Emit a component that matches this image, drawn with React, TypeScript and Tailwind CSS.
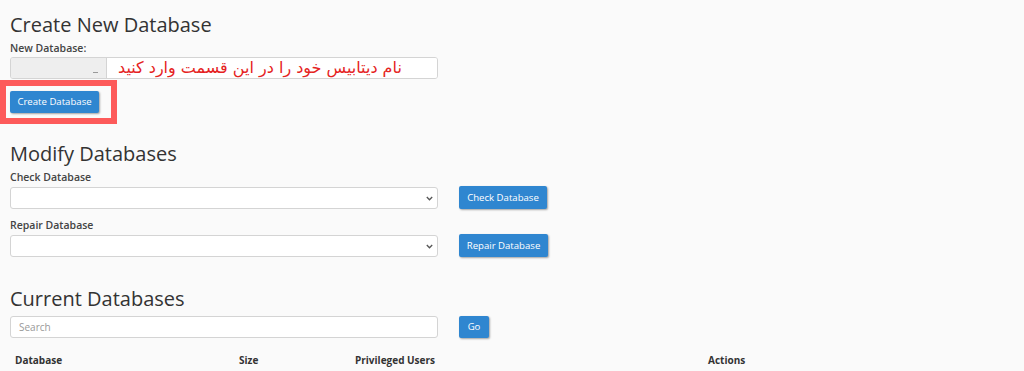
const font = { fontFamily: '"Open Sans", sans-serif' };

function Btn({ label, className = '' }: { label: string; className?: string }) {
  return (
    <button
      className={`shrink-0 rounded-[2px] bg-[#2f86d0] text-white text-[9.6px] leading-none whitespace-nowrap shadow-[1px_1px_2px_rgba(0,0,0,0.35)] ${className}`}
    >
      {label}
    </button>
  );
}

function Select() {
  return (
    <div className="relative w-[428px] h-[22px] bg-white border border-[#d4d4d4] rounded-[3px]">
      <svg
        className="absolute right-[4px] top-[8px]"
        width="7"
        height="5"
        viewBox="0 0 7 5"
        fill="none"
        stroke="#555"
        strokeWidth="1.3"
      >
        <path d="M0.8 1 L3.5 3.8 L6.2 1" />
      </svg>
    </div>
  );
}

function Label({ text, className = '' }: { text: string; className?: string }) {
  return <p className={`text-[10.5px] leading-[14px] font-semibold text-[#444] ${className}`}>{text}</p>;
}

export default function App() {
  return (
    <div className="w-[1024px] h-[371px] overflow-hidden bg-[#fafafa] text-[#333]" style={font}>
      <div className="pl-[10px] pt-[11px]">
        <h2 className="text-[20px] leading-[27px] text-[#333]">Create New Database</h2>
        <Label text="New Database:" className="mt-[3px]" />
        <div className="mt-[2px] flex w-[428px] h-[22px] border border-[#d4d4d4] rounded-[3px] overflow-hidden">
          <div className="w-[96px] bg-[#eeeeee] border-r border-[#d4d4d4] flex items-end justify-end pr-[8px] pb-[5px]">
            <span className="block w-[5px] h-[1px] bg-[#999]" />
          </div>
          <div className="flex-1 bg-white flex items-center pl-[11px]">
            <span
              dir="rtl"
              className="text-[16px] leading-[20px] text-[#e52222]"
              style={{ fontFamily: '"DejaVu Sans", "Noto Sans", sans-serif' }}
            >
              نام دیتابیس خود را در این قسمت وارد کنید
            </span>
          </div>
        </div>
      </div>

      <div className="mt-[1px] w-[117px] h-[44px] border-[6px] border-[#fd5a5a] flex items-center pl-[4px]">
        <Btn label="Create Database" className="w-[89px] h-[22px]" />
      </div>

      <div className="pl-[10px] pt-[16px]">
        <h2 className="text-[20px] leading-[27px] text-[#333]">Modify Databases</h2>
        <Label text="Check Database" className="mt-[3px]" />
        <div className="mt-[2px] flex items-center gap-[21px]">
          <Select />
          <Btn label="Check Database" className="w-[88px] h-[23px]" />
        </div>
        <Label text="Repair Database" className="mt-[9px]" />
        <div className="mt-[2px] flex items-center gap-[21px]">
          <Select />
          <Btn label="Repair Database" className="w-[89px] h-[23px]" />
        </div>

        <h2 className="mt-[28px] text-[20px] leading-[27px] text-[#333]">Current Databases</h2>
        <div className="mt-[4px] flex items-center gap-[21px]">
          <div className="w-[428px] h-[22px] bg-white border border-[#d4d4d4] rounded-[3px] flex items-center pl-[8px]">
            <span className="text-[10px] text-[#999]">Search</span>
          </div>
          <Btn label="Go" className="w-[30px] h-[22px]" />
        </div>
        <div className="mt-[15px] flex text-[10px] font-bold text-[#333] leading-[14px]">
          <span className="w-[229px] pl-[5px]">Database</span>
          <span className="w-[116px]">Size</span>
          <span className="w-[353px]">Privileged Users</span>
          <span>Actions</span>
        </div>
      </div>
    </div>
  );
}
